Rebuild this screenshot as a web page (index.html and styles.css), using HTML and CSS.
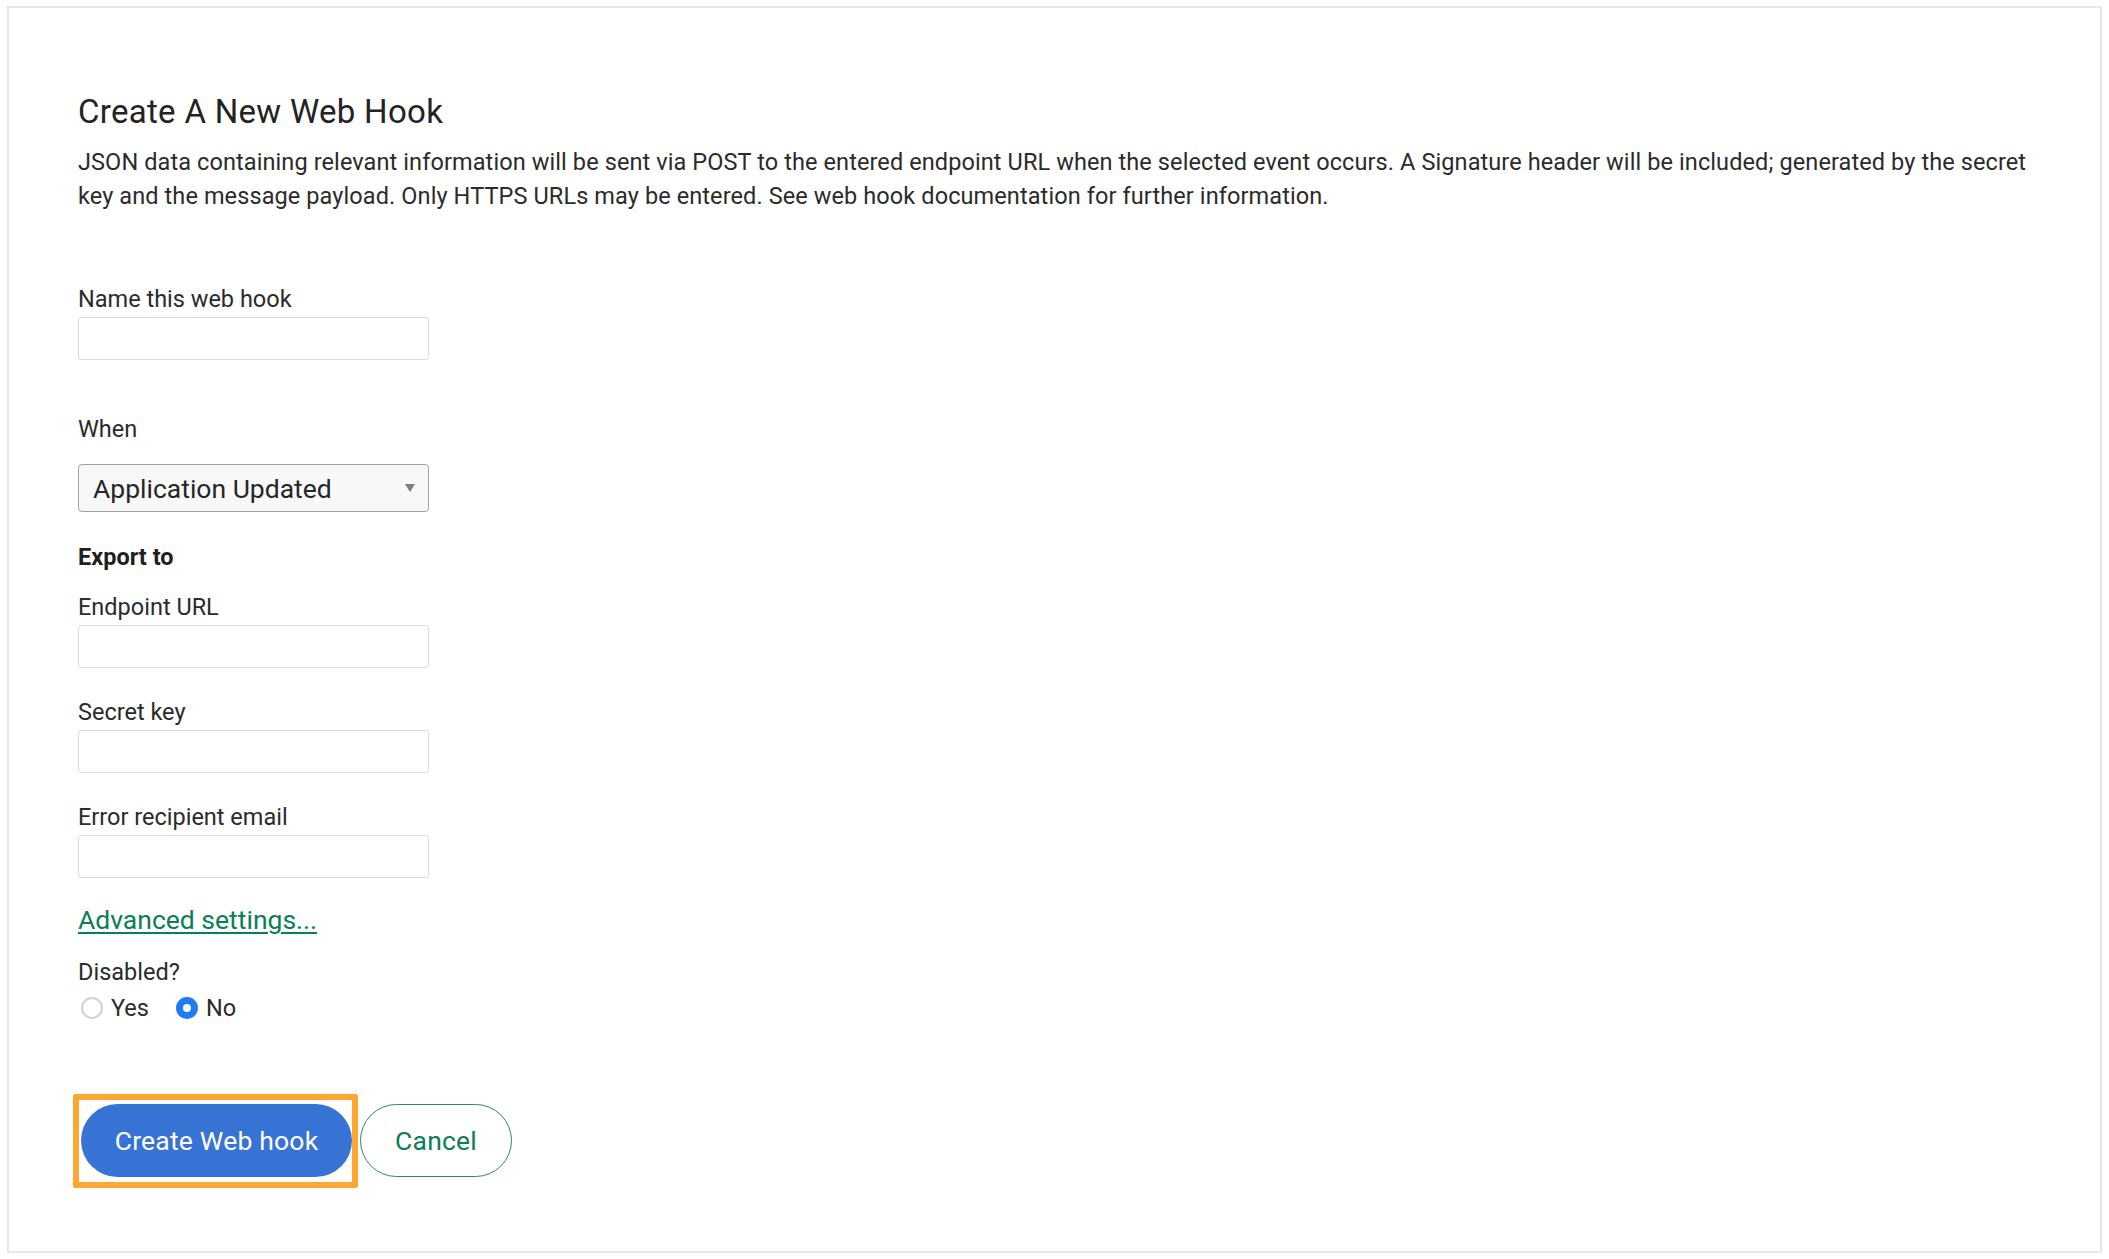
FILE: index.html
```html
<!DOCTYPE html>
<html lang="en">
<head>
<meta charset="utf-8">
<title>Create A New Web Hook</title>
<link rel="stylesheet" href="styles.css">
</head>
<body>
<div class="page">
  <div class="card">
    <h1 class="title">Create A New Web Hook</h1>
    <p class="desc">JSON data containing relevant information will be sent via POST to the entered endpoint URL when the selected event occurs. A Signature header will be included; generated by the secret key and the message payload. Only HTTPS URLs may be entered. See web hook documentation for further information.</p>

    <div class="field field-first">
      <label class="label">Name this web hook</label>
      <div class="input"></div>
    </div>

    <div class="field field-when">
      <label class="label">When</label>
      <div class="select">
        <span class="select-text">Application Updated</span>
        <span class="select-arrow"></span>
      </div>
    </div>

    <div class="section-title">Export to</div>

    <div class="field field-endpoint">
      <label class="label">Endpoint URL</label>
      <div class="input"></div>
    </div>

    <div class="field field-next">
      <label class="label">Secret key</label>
      <div class="input"></div>
    </div>

    <div class="field field-next">
      <label class="label">Error recipient email</label>
      <div class="input"></div>
    </div>

    <a class="adv-link" href="#">Advanced settings...</a>

    <div class="disabled-label">Disabled?</div>
    <div class="radios">
      <span class="radio"></span><span class="radio-text">Yes</span>
      <span class="radio radio-on"></span><span class="radio-text">No</span>
    </div>

    <div class="actions">
      <div class="highlight">
        <button class="btn-primary">Create Web hook</button>
      </div>
      <button class="btn-cancel">Cancel</button>
    </div>
  </div>
</div>
</body>
</html>
```

FILE: styles.css
```css
* { box-sizing: border-box; }
html, body { margin: 0; padding: 0; background: #ffffff; }
body {
  font-family: Roboto, "Liberation Sans", Arial, sans-serif;
  color: #2b2b2b;
}
.page { padding: 6px 7px 6px 7px; }
.card {
  border: 2px solid #e8e8e8;
  width: 2095px;
  height: 1247px;
  padding: 85px 66px 0 69px;
}
.title {
  margin: 0;
  font-size: 33px;
  line-height: 38px;
  font-weight: 400;
  letter-spacing: 0.3px;
  color: #232323;
}
.desc {
  margin: 15px 0 0 0;
  font-size: 23.5px;
  line-height: 33.5px;
  letter-spacing: 0.1px;
  color: #2b2b2b;
}
.field { display: flex; flex-direction: column; }
.field-first { margin-top: 72px; }
.field-when { margin-top: 55px; }
.field-endpoint { margin-top: 22px; }
.field-next { margin-top: 30px; }
.label {
  font-size: 23.5px;
  line-height: 28px;
  color: #2b2b2b;
}
.input {
  margin-top: 4px;
  width: 351px;
  height: 43px;
  border: 1px solid #dcdcdc;
  border-radius: 3px;
  background: #fff;
}
.select {
  margin-top: 21px;
  width: 351px;
  height: 48px;
  border: 1px solid #a3a3a3;
  border-radius: 4px;
  background: #f8f8f8;
  display: flex;
  align-items: center;
  justify-content: space-between;
  padding: 0 13px 0 14px;
}
.select-text {
  font-size: 26.5px;
  color: #262626;
}
.select-arrow {
  width: 0;
  height: 0;
  border-left: 5px solid transparent;
  border-right: 5px solid transparent;
  border-top: 8px solid #7d7d7d;
}
.section-title {
  margin-top: 31px;
  font-size: 23.5px;
  line-height: 28px;
  font-weight: 700;
  color: #1f1f1f;
}
.adv-link {
  display: inline-block;
  margin-top: 26px;
  font-size: 26.5px;
  line-height: 32px;
  color: #0a7d59;
  text-decoration: underline;
  text-decoration-thickness: 2px;
  text-underline-offset: 3px;
}
.disabled-label {
  margin-top: 22px;
  font-size: 23.5px;
  line-height: 28px;
}
.radios {
  margin-top: 8px;
  display: flex;
  align-items: center;
  height: 28px;
}
.radio {
  width: 22px;
  height: 22px;
  border-radius: 50%;
  border: 2px solid #d2d2d2;
  background: #fff;
  margin-left: 3px;
  flex: none;
}
.radio-on {
  margin-left: 27px;
  border: 7px solid #1f7cf3;
  background: #fff;
}
.radio-text {
  margin-left: 8px;
  font-size: 23.5px;
  line-height: 28px;
  color: #2b2b2b;
}
.actions {
  margin-top: 72px;
  margin-left: -5px;
  display: flex;
  align-items: flex-start;
}
.highlight {
  border: 6px solid #fda631;
  border-radius: 2px;
  padding: 4px 0 5px 2px;
}
.btn-primary {
  display: block;
  width: 271px;
  height: 73px;
  border: none;
  border-radius: 37px;
  background: #3673d5;
  color: #ffffff;
  font-family: Roboto, "Liberation Sans", Arial, sans-serif;
  font-size: 26.5px;
  font-weight: 400;
  letter-spacing: 0.2px;
  padding: 0;
}
.btn-cancel {
  margin-left: 2px;
  margin-top: 10px;
  width: 152px;
  height: 73px;
  border: 1.5px solid #2a8a66;
  border-radius: 37px;
  background: #ffffff;
  color: #0a7d59;
  font-family: Roboto, "Liberation Sans", Arial, sans-serif;
  font-size: 26.5px;
  font-weight: 400;
  letter-spacing: 0.2px;
  padding: 0;
}
```
